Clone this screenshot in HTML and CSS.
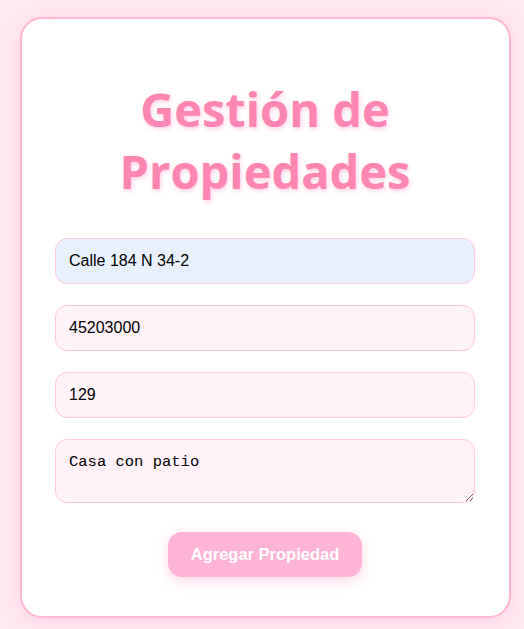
FILE: index.html
```html
<!DOCTYPE html>
<html lang="es">
<head>
<meta charset="utf-8">
<title>Gestión de Propiedades</title>
<link rel="stylesheet" href="styles.css">
</head>
<body>
<div class="card">
  <h1 class="title">Gestión de Propiedades</h1>
  <form class="form">
    <input class="field field-autofill" type="text" value="Calle 184 N 34-2">
    <input class="field" type="text" value="45203000">
    <input class="field" type="text" value="129">
    <textarea class="field field-area">Casa con patio</textarea>
    <div class="actions">
      <button class="btn" type="button">Agregar Propiedad</button>
    </div>
  </form>
</div>
</body>
</html>
```
FILE: styles.css
```css
html, body {
  margin: 0;
  background: #ffe9f2;
}
body {
  padding: 17px 13px 14px 20px;
  font-family: "Liberation Sans", Arial, sans-serif;
}
.card {
  background: #fff;
  border: 2px solid #ffb6d3;
  border-radius: 22px;
  padding: 33px 34px 39px 33px;
  box-shadow: 0 4px 18px rgba(255, 170, 205, 0.35);
}
.title {
  margin: 26px 0 36px;
  font-family: "Open Sans", "Noto Sans", sans-serif;
  font-weight: 700;
  font-size: 47px;
  line-height: 62px;
  text-align: center;
  color: #ff85b3;
  text-shadow: 1px 2px 4px rgba(255, 150, 190, 0.45);
}
.form {
  display: flex;
  flex-direction: column;
  gap: 21px;
}
.field {
  box-sizing: border-box;
  width: 100%;
  height: 46px;
  margin: 0;
  padding: 0 13px;
  border: 1px solid #ffc9de;
  border-radius: 12px;
  background: #fff2f8;
  font-family: "Liberation Sans", Arial, sans-serif;
  font-size: 16px;
  color: #000;
  outline: none;
}
.field-autofill {
  background: #e8f0fe;
}
.field-area {
  height: 64px;
  padding: 13px 13px;
  font-family: "Liberation Mono", monospace;
  font-size: 15.5px;
  line-height: 19px;
  resize: vertical;
}
.actions {
  display: flex;
  justify-content: center;
  margin-top: 8px;
}
.btn {
  width: 194px;
  height: 45px;
  border: none;
  border-radius: 14px;
  background: #ffb3d6;
  color: #fff;
  font-family: "Liberation Sans", Arial, sans-serif;
  font-weight: 700;
  font-size: 16.5px;
  box-shadow: 0 4px 12px rgba(255, 170, 205, 0.45);
  cursor: pointer;
}
```
